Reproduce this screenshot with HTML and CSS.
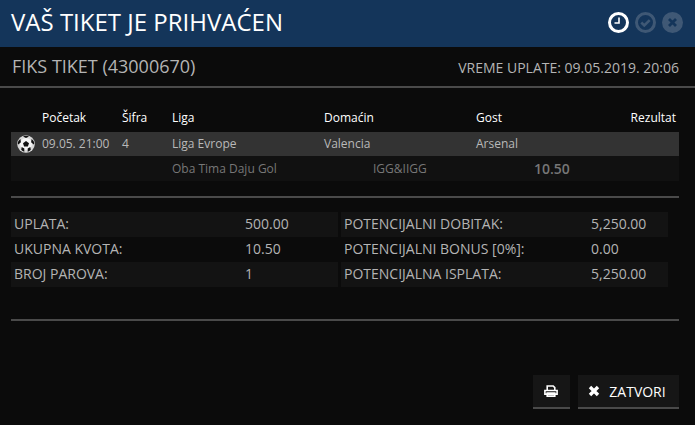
FILE: index.html
```html
<!DOCTYPE html>
<html lang="sr">
<head>
<meta charset="utf-8">
<title>Tiket</title>
<link rel="stylesheet" href="styles.css">
</head>
<body>
<header class="top">
  <h1 class="title">VAŠ TIKET JE PRIHVAĆEN</h1>
  <div class="steps">
    <svg class="step" viewBox="0 0 21 21"><circle cx="10.5" cy="10.5" r="9" fill="none" stroke="#fff" stroke-width="3"/><path d="M11 5.5V11H6.5" fill="none" stroke="#fff" stroke-width="1.6"/></svg>
    <svg class="step" viewBox="0 0 21 21"><circle cx="10.5" cy="10.5" r="9" fill="none" stroke="#3f5875" stroke-width="3"/><path d="M6.3 10.5l3 3 5.4-5.4" fill="none" stroke="#3f5875" stroke-width="2.6"/></svg>
    <svg class="step" viewBox="0 0 21 21"><circle cx="10.5" cy="10.5" r="10.5" fill="#3f5875"/><path d="M7 7l7 7M14 7l-7 7" fill="none" stroke="#14355a" stroke-width="2.8"/></svg>
  </div>
</header>
<section class="sub">
  <div class="sub-name">FIKS TIKET (43000670)</div>
  <div class="sub-time">VREME UPLATE: 09.05.2019. 20:06</div>
</section>
<section class="pairs">
  <div class="row head">
    <span class="c-icon"></span><span class="c-start">Početak</span><span class="c-code">Šifra</span><span class="c-league">Liga</span><span class="c-home">Domaćin</span><span class="c-away">Gost</span><span class="c-res">Rezultat</span>
  </div>
  <div class="row match">
    <span class="c-icon">
      <svg class="ball" viewBox="0 0 18 18"><circle cx="9" cy="9" r="8.8" fill="#d8d8d8"/><circle cx="9" cy="9" r="6" fill="#f4f4f4"/><path d="M9 6l3 2.2-1.1 3.4H7.1L6 8.2z" fill="#111"/><path d="M9 .8a8.2 8.2 0 0 1 3 .6L9 3 6 1.4A8.2 8.2 0 0 1 9 .8zM1.4 6l2-2 .5 3.2-2.6 2.2-.5-.4A8.2 8.2 0 0 1 1.4 6zM16.6 6a8.2 8.2 0 0 1 .6 3l-.5.4-2.6-2.2.5-3.2zM4.2 14.8l.5-2.8 2.6 1.6v3.2A8.2 8.2 0 0 1 4.2 14.8zM13.8 14.8a8.2 8.2 0 0 1-3.1 2v-3.2l2.6-1.6z" fill="#111"/></svg>
    </span><span class="c-start">09.05. 21:00</span><span class="c-code">4</span><span class="c-league">Liga Evrope</span><span class="c-home">Valencia</span><span class="c-away">Arsenal</span><span class="c-res"></span>
  </div>
  <div class="row bet">
    <span class="bet-name">Oba Tima Daju Gol</span><span class="bet-code">IGG&amp;IIGG</span><span class="bet-odd">10.50</span>
  </div>
</section>
<section class="summary">
  <div class="col">
    <div class="line"><span>UPLATA:</span><span class="val">500.00</span></div>
    <div class="line"><span>UKUPNA KVOTA:</span><span class="val">10.50</span></div>
    <div class="line"><span>BROJ PAROVA:</span><span class="val">1</span></div>
  </div>
  <div class="col col-right">
    <div class="line"><span>POTENCIJALNI DOBITAK:</span><span class="val">5,250.00</span></div>
    <div class="line"><span>POTENCIJALNI BONUS [0%]:</span><span class="val">0.00</span></div>
    <div class="line"><span>POTENCIJALNA ISPLATA:</span><span class="val">5,250.00</span></div>
  </div>
</section>
<footer class="actions">
  <button class="btn btn-print" type="button">
    <svg class="ico ico-print" viewBox="0 0 14 12"><path d="M3.2 5.5V1h6l1.6 1.6v2.9M.9 5.5h12.2v3.6H.9zM3.2 8h7.6v3.1H3.2z" fill="none" stroke="#fff" stroke-width="1.6"/></svg>
  </button>
  <button class="btn btn-close" type="button">
    <svg class="ico ico-x" viewBox="0 0 12 12"><path d="M2 2l8 8M10 2l-8 8" fill="none" stroke="#fff" stroke-width="3.4"/></svg>
    <span>ZATVORI</span>
  </button>
</footer>
</body>
</html>
```
FILE: styles.css
```css
* { box-sizing: border-box; }
html, body { margin: 0; padding: 0; }
body {
  width: 695px;
  height: 425px;
  overflow: hidden;
  background: #0b0b0b;
  color: #b4b4b4;
  font-family: "Open Sans", "Noto Sans", sans-serif;
  font-size: 12px;
}
.top {
  height: 47px;
  background: #14355a;
  display: flex;
  align-items: center;
  justify-content: space-between;
  padding: 0 12px 3px 11px;
}
.title {
  margin: 0;
  color: #fff;
  font-size: 24px;
  font-weight: 400;
  line-height: 44px;
}
.steps { display: flex; gap: 6px; }
.step { width: 21px; height: 21px; display: block; }
.sub {
  height: 41px;
  border-bottom: 2px solid #4a4a4a;
  display: flex;
  justify-content: space-between;
  padding: 0 16px 0 12px;
}
.sub-name { font-size: 18px; line-height: 39px; color: #b4b4b4; }
.sub-time { font-size: 14px; line-height: 42px; color: #b4b4b4; }
.pairs { margin: 20px 16px 0 11px; padding-bottom: 15px; border-bottom: 2px solid #4a4a4a; }
.row { display: flex; align-items: center; }
.head { height: 24px; color: #fff; font-size: 12px; padding-bottom: 5px; }
.match { height: 24px; background: #333; color: #b9b9b9; font-size: 12px; padding-bottom: 1px; }
.bet { height: 25px; background: #111; color: #777; font-size: 12px; padding-bottom: 1px; }
.c-icon { width: 31px; display: flex; padding-left: 6px; }
.c-start { width: 80px; }
.c-code { width: 50px; }
.c-league { width: 152px; }
.c-home { width: 152px; }
.c-away { width: 100px; }
.c-res { flex: 1; text-align: right; padding-right: 3px; }
.ball { width: 18px; height: 18px; display: block; }
.bet-name { margin-left: 161px; width: 201px; }
.bet-code { width: 161px; }
.bet-odd { font-size: 14px; font-weight: 600; color: #777; }
.summary { display: flex; gap: 3px; margin: 14px 27px 0 11px; }
.col { width: 327px; }
.line {
  height: 25px;
  display: flex;
  align-items: center;
  padding-left: 3px;
  padding-bottom: 2px;
  font-size: 14px;
  color: #b4b4b4;
}
.line:nth-child(odd) { background: #131313; }
.line > span:first-child { width: 231px; }
.col-right .line > span:first-child { width: 247px; }
.actions {
  margin: 32px 16px 0 11px;
  padding-top: 54px;
  border-top: 2px solid #4a4a4a;
  display: flex;
  justify-content: flex-end;
  gap: 8px;
}
.btn {
  height: 34px;
  background: #161616;
  border: 0;
  border-bottom: 2px solid #4a4a4a;
  color: #fff;
  font-family: inherit;
  font-size: 14px;
  padding: 0 1px 0 0;
  display: flex;
  align-items: center;
  justify-content: center;
}
.btn-print { width: 37px; }
.btn-close { width: 101px; gap: 9px; padding-right: 3px; }
.ico { display: block; }
.ico-print { width: 14px; height: 12px; }
.ico-x { width: 12px; height: 12px; }
```
